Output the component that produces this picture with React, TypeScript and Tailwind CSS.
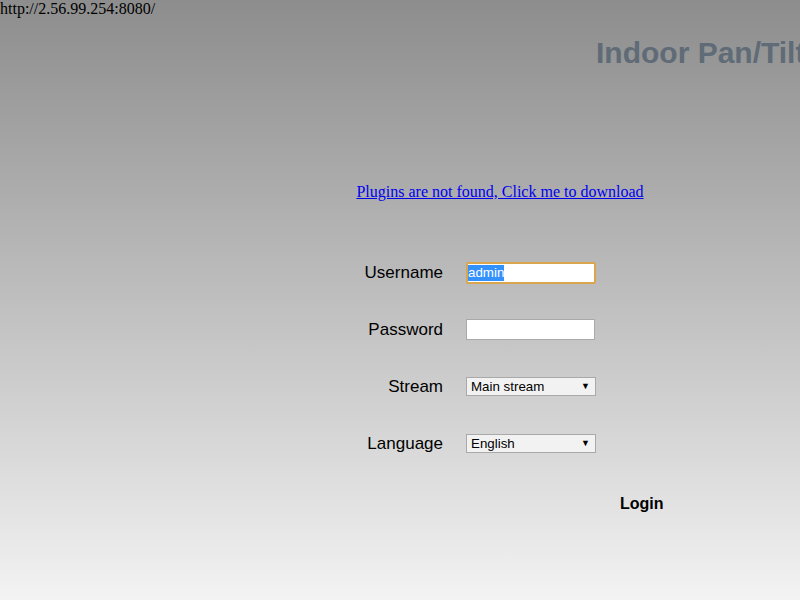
import React from "react";

export default function App() {
  const row = "flex items-center h-[57px]";
  const label = "w-[443px] text-right text-[17px] text-black pr-0";
  return (
    <div
      className="relative w-[800px] h-[600px] overflow-hidden bg-gradient-to-b from-[#8d8d8d] to-[#f3f3f3]"
      style={{ fontFamily: '"Liberation Sans", Arial, sans-serif' }}
    >
      <div className="h-[18px] text-[16px] leading-[18px] text-black" style={{ fontFamily: '"Liberation Serif", serif' }}>
        http://2.56.99.254:8080/
      </div>
      <div className="pl-[596px] whitespace-nowrap text-[30px] leading-[34px] font-bold text-[#5f6b76] mt-[18px]">
        Indoor Pan/Tilt IP Camera
      </div>
      <div className="mt-[110px] text-center pl-[200px]">
        <a
          href="#"
          className="text-[16px] text-[#0000ee] underline"
          style={{ fontFamily: '"Liberation Serif", serif' }}
        >
          Plugins are not found, Click me to download
        </a>
      </div>
      <div className="mt-[40px] flex flex-col">
        <div className={row}>
          <div className={label}>Username</div>
          <div className="ml-[23px] w-[130px] h-[22px] border-2 border-[#d9a54f] rounded-[2px] bg-white flex items-center pl-[0px]">
            <span className="bg-[#3390ff] text-white text-[13.33px] leading-[16px]">admin</span>
          </div>
        </div>
        <div className={row}>
          <div className={label}>Password</div>
          <div className="ml-[23px] w-[129px] h-[21px] border border-[#a9a9a9] bg-white" />
        </div>
        <div className={row}>
          <div className={label}>Stream</div>
          <div className="ml-[23px] w-[130px] h-[19px] border border-[#a9a9a9] bg-[#f2f2f2] flex items-center justify-between pl-[4px] pr-[5px] text-[13.33px] text-black">
            <span>Main stream</span>
            <span className="text-[9px]">▼</span>
          </div>
        </div>
        <div className={row}>
          <div className={label}>Language</div>
          <div className="ml-[23px] w-[130px] h-[19px] border border-[#a9a9a9] bg-[#f2f2f2] flex items-center justify-between pl-[4px] pr-[5px] text-[13.33px] text-black">
            <span>English</span>
            <span className="text-[9px]">▼</span>
          </div>
        </div>
        <div className="flex items-center h-[63px]">
          <div className="pl-[620px] text-[16px] font-bold text-black">Login</div>
        </div>
      </div>
    </div>
  );
}
